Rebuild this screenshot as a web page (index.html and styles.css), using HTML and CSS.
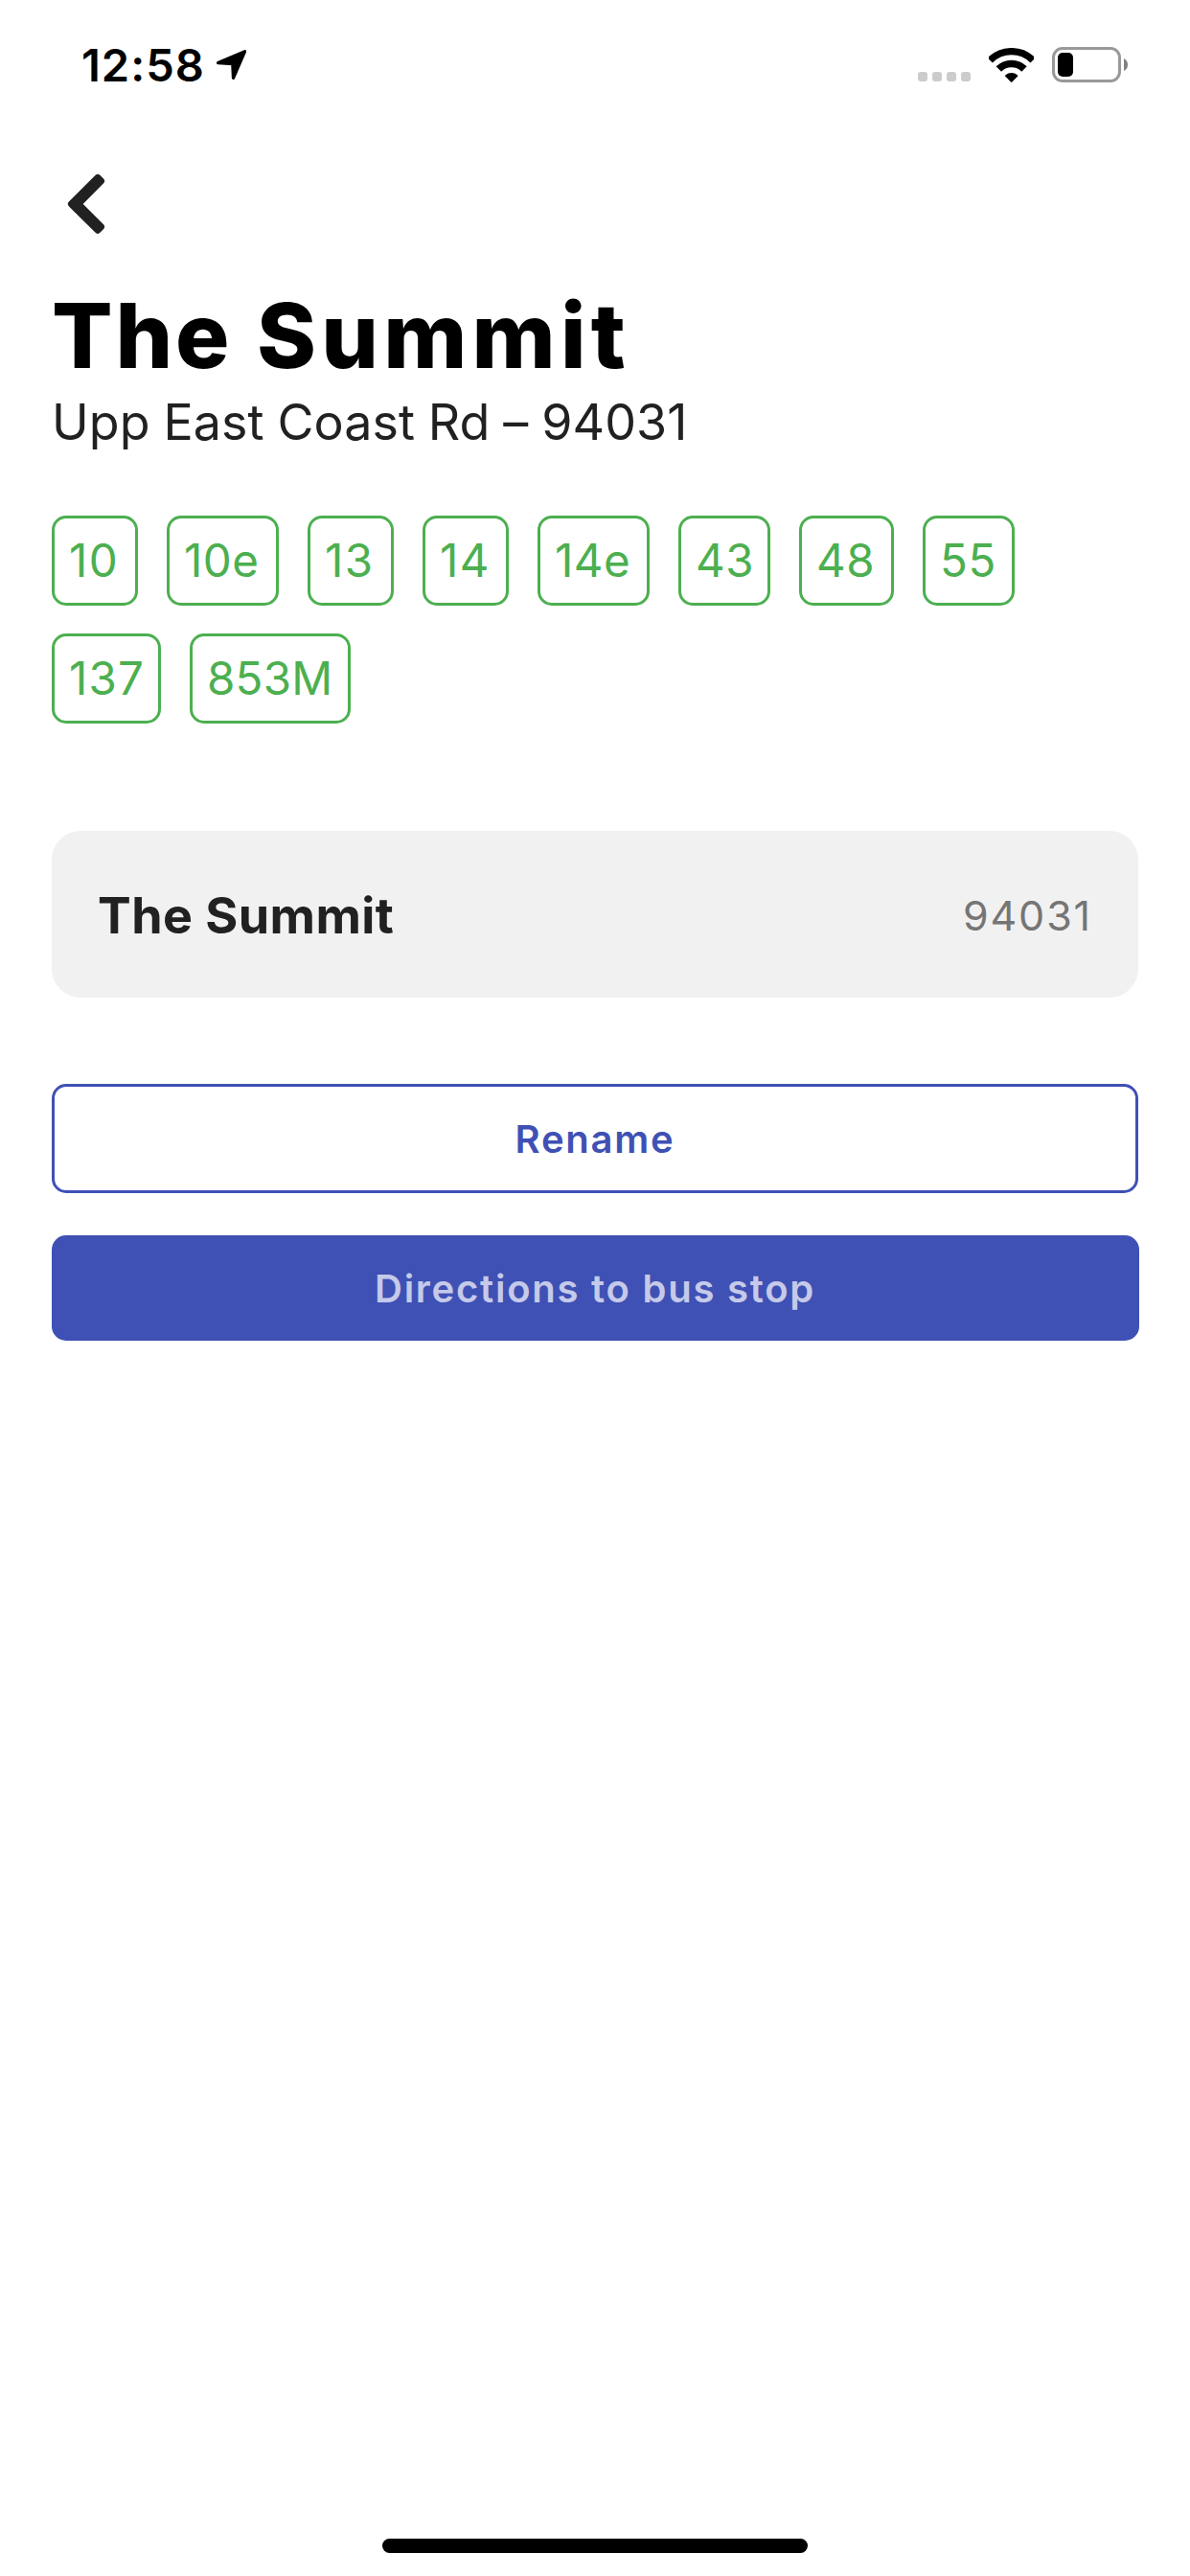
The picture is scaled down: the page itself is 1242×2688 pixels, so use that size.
FILE: index.html
```html
<!DOCTYPE html>
<html lang="en">
<head>
<meta charset="utf-8">
<title>The Summit</title>
<link rel="stylesheet" href="styles.css">
</head>
<body>
<div class="screen">
  <header class="status">
    <div class="status-left">
      <span class="time">12:58</span>
      <svg class="location" viewBox="557 96 95 94" aria-hidden="true"><path d="M562 137 645.500 101 609.500 184 607.500 140Z"/></svg>
    </div>
    <div class="status-right">
      <div class="signal"><i></i><i></i><i></i><i></i></div>
      <svg class="wifi" viewBox="305 57 143 108" aria-hidden="true">
        <path class="arc" stroke-width="22" d="M308.800 95.800A95 95 0 0 1 443.200 95.800"/>
        <path class="arc" stroke-width="23" d="M336 123A56.500 56.500 0 0 1 416 123"/>
        <path d="M374 163.500 356.200 145.500Q355.500 143.500 357.500 142A28 28 0 0 1 394.500 142Q396.500 143.500 395.800 145.500L378 163.500Q376 165.500 374 163.500Z"/>
      </svg>
      <svg class="battery" viewBox="0 0 79 37" aria-hidden="true">
        <rect class="shell" x="1.500" y="1.500" width="69" height="34" rx="9.500"/>
        <rect x="6" y="6" width="16" height="25" rx="5"/>
        <path class="nub" d="M75 12Q79 14 79 18.500Q79 23 75 25Z"/>
      </svg>
    </div>
  </header>

  <nav class="nav">
    <svg class="back" viewBox="70 181 40 64" role="img" aria-label="Back"><path d="M74.700 212.800 102 185.700 105.200 188.900 81.400 212.800 105.200 236.700 102 239.900Z"/></svg>
  </nav>

  <main class="content">
    <h1 class="title">The <span class="title-wide">Summit</span></h1>
    <p class="road">Upp East Coast Rd – 94031</p>

    <ul class="services">
      <li class="tag tag-s">10</li>
      <li class="tag tag-l">10e</li>
      <li class="tag tag-s">13</li>
      <li class="tag tag-s">14</li>
      <li class="tag tag-l">14e</li>
      <li class="tag tag-m">43</li>
      <li class="tag tag-m tag-wide">48</li>
      <li class="tag tag-m">55</li>
      <li class="tag tag-number">137</li>
      <li class="tag tag-xl">853M</li>
    </ul>

    <section class="card">
      <span class="card-name">The Summit</span>
      <span class="card-code">94031</span>
    </section>

    <button class="button button-outline">Rename</button>
    <button class="button button-solid">Directions to bus stop</button>
  </main>

  <div class="home-indicator"></div>
</div>
</body>
</html>
```
FILE: styles.css
```css
* {
  box-sizing: border-box;
}

body {
  margin: 0;
  background: #fff;
  color: #212121;
  font-family: Inter, "Liberation Sans", sans-serif;
}

.screen {
  display: flex;
  flex-direction: column;
  width: 1242px;
  height: 2688px;
  padding-bottom: 24px;
}

/* Status bar */
.status {
  display: flex;
  justify-content: space-between;
  align-items: center;
  height: 135px;
  padding: 0 65px 0 85px;
  color: #000;
}

.status-left,
.status-right {
  display: flex;
  align-items: center;
}

.time {
  width: 140.500px;
  font-size: 47px;
  line-height: 57px;
  font-weight: 600;
  letter-spacing: 1px;
}

.location {
  width: 31.700px;
  height: 31.300px;
  stroke: #000;
  stroke-width: 10;
  stroke-linejoin: round;
}

.signal {
  display: flex;
  gap: 5px;
  padding-top: 25px;
  margin-right: 18.500px;
}

.signal i {
  width: 10px;
  height: 10px;
  border-radius: 3px;
  background: #ccc;
}

.wifi {
  width: 47.700px;
  height: 36px;
  margin-right: 18.800px;
}

.arc {
  fill: none;
  stroke: #000;
}

.battery {
  width: 79px;
  height: 37px;
}

.shell {
  fill: none;
  stroke: #999;
  stroke-width: 3;
}

.nub {
  fill: #808080;
}

/* Back navigation */
.nav {
  display: flex;
  height: 158px;
  padding: 46px 70px 0;
}

.back {
  width: 40px;
  height: 64px;
  fill: #212121;
  stroke: #212121;
  stroke-width: 7.500;
  stroke-linejoin: round;
}

/* Stop details */
.content {
  display: flex;
  flex-direction: column;
  padding: 0 54px;
}

.title {
  margin: 0;
  color: #000;
  font-size: 94px;
  line-height: 114px;
  font-weight: 850;
  letter-spacing: 2.800px;
  word-spacing: 2.500px;
}

.title-wide {
  letter-spacing: 5.200px;
}

.road {
  margin: 0 0 63px;
  font-size: 52px;
  line-height: 68px;
  letter-spacing: 0.050px;
  word-spacing: -0.800px;
}

.services {
  display: flex;
  flex-wrap: wrap;
  gap: 29px 30px;
  margin: 0 0 112px;
  padding: 0;
  list-style: none;
}

.tag {
  height: 94px;
  padding-left: 15px;
  border: 3px solid #4caf50;
  border-radius: 15px;
  color: #4caf50;
  font-size: 47.500px;
  line-height: 88px;
  letter-spacing: 0.500px;
}

.tag-s {
  width: 90px;
  letter-spacing: 1.500px;
}

.tag-m { width: 96px; }
.tag-wide { width: 99px; }

.tag-number {
  width: 114px;
  letter-spacing: 1.200px;
}

.tag-l { width: 117px; }

.tag-xl {
  width: 168px;
  letter-spacing: 0.200px;
}

.card {
  display: flex;
  justify-content: space-between;
  align-items: center;
  height: 174px;
  margin-bottom: 90px;
  padding: 2px 48px 0;
  border-radius: 30px;
  background: #f1f1f1;
}

.card-name {
  font-size: 52px;
  font-weight: 700;
  letter-spacing: 0.450px;
}

.card-code {
  color: #757575;
  font-size: 43px;
  letter-spacing: 1.900px;
}

.button {
  padding: 0;
  border-radius: 15px;
  font-family: inherit;
  font-size: 40px;
  font-weight: 600;
  letter-spacing: 1.750px;
}

.button-outline {
  height: 114px;
  margin-bottom: 44px;
  border: 3px solid #3f51b5;
  background: transparent;
  color: #3f51b5;
}

.button-solid {
  height: 110px;
  margin: 0 -0.500px;
  border: 0;
  background: #3f51b5;
  color: #c5cae9;
}

.home-indicator {
  width: 444px;
  height: 15px;
  margin: auto auto 0;
  border-radius: 8px;
  background: #000;
}
```
